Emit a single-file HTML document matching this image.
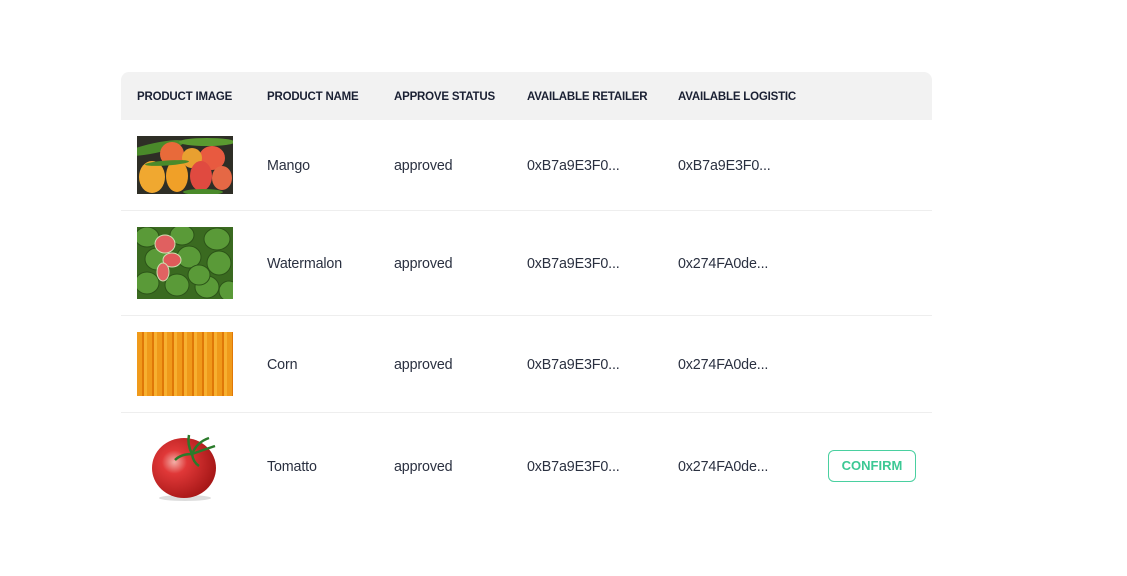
<!DOCTYPE html>
<html><head><meta charset="utf-8"><style>
*{margin:0;padding:0;box-sizing:border-box}
body{width:1127px;height:576px;background:#fff;font-family:"Segoe UI","Liberation Sans",sans-serif;position:relative;overflow:hidden;color:#222a3a}
.hd{position:absolute;left:121px;top:72px;width:811px;height:48px;background:#f2f2f2;border-radius:8px 8px 0 0}
.h{position:absolute;top:90px;font-size:11.5px;font-weight:bold;color:#1a2033;letter-spacing:-0.2px;line-height:14px;top:90px}
.t{position:absolute;font-size:14.3px;color:#2a3040;line-height:18px;letter-spacing:-0.15px}
.ln{position:absolute;left:121px;width:811px;height:1px;background:#eeeeee}
.img{position:absolute;left:137px;width:96px;overflow:hidden}
.btn{position:absolute;left:828px;top:450px;width:88px;height:32px;border:1px solid #4ad0a0;border-radius:6px;color:#3cc894;font-size:13px;font-weight:bold;text-align:center;line-height:30px}
</style></head><body>
<div class="hd"></div>
<div class="h" style="left:137px">PRODUCT IMAGE</div>
<div class="h" style="left:267px">PRODUCT NAME</div>
<div class="h" style="left:394px">APPROVE STATUS</div>
<div class="h" style="left:527px">AVAILABLE RETAILER</div>
<div class="h" style="left:678px">AVAILABLE LOGISTIC</div>

<div class="img" style="top:136px;height:58px;background:#2e2e26">
<svg width="96" height="58"><g>
<ellipse cx="18" cy="12" rx="30" ry="5" fill="#4a8a2a" transform="rotate(-12 18 12)"/>
<ellipse cx="70" cy="6" rx="28" ry="4" fill="#5a9a30"/>
<ellipse cx="35" cy="18" rx="12" ry="12" fill="#e86a3a"/>
<ellipse cx="75" cy="22" rx="13" ry="12" fill="#e85a40"/>
<ellipse cx="55" cy="22" rx="10" ry="10" fill="#e8a030"/>
<ellipse cx="15" cy="41" rx="13" ry="16" fill="#f0a830"/>
<ellipse cx="40" cy="40" rx="11" ry="16" fill="#f0a028"/>
<ellipse cx="64" cy="40" rx="11" ry="15" fill="#e04a40"/>
<ellipse cx="85" cy="42" rx="10" ry="12" fill="#e56845"/>
<ellipse cx="30" cy="27" rx="22" ry="2.5" fill="#4a8a2a" transform="rotate(-4 30 27)"/>
<ellipse cx="66" cy="56" rx="20" ry="3" fill="#4a8a2a"/>
</g></svg></div>

<div class="img" style="top:227px;height:72px;background:#3a6a20">
<svg width="96" height="72"><g fill="#5a9a38" stroke="#2c5418" stroke-width="1">
<ellipse cx="10" cy="10" rx="12" ry="10"/><ellipse cx="45" cy="8" rx="12" ry="10"/><ellipse cx="80" cy="12" rx="13" ry="11"/>
<ellipse cx="20" cy="32" rx="12" ry="11"/><ellipse cx="52" cy="30" rx="12" ry="11"/><ellipse cx="82" cy="36" rx="12" ry="12"/>
<ellipse cx="10" cy="56" rx="12" ry="11"/><ellipse cx="40" cy="58" rx="12" ry="11"/><ellipse cx="70" cy="60" rx="12" ry="11"/><ellipse cx="92" cy="64" rx="10" ry="10"/>
<ellipse cx="62" cy="48" rx="11" ry="10"/></g>
<ellipse cx="28" cy="17" rx="10" ry="9" fill="#e06060" stroke="#cde0b0"/>
<ellipse cx="35" cy="33" rx="9" ry="7" fill="#e05a5a" stroke="#cde0b0"/>
<ellipse cx="26" cy="45" rx="6" ry="9" fill="#e06262" stroke="#cde0b0"/>
</svg></div>

<div class="img" style="top:332px;height:64px;background:repeating-linear-gradient(90deg,#f09a1a 0 5px,#e07808 5px 7px,#f7b030 7px 10px),#f09a1a"></div>

<div class="img" style="top:432px;height:70px">
<svg width="96" height="70"><defs><radialGradient id="r" cx="0.35" cy="0.4" r="0.65"><stop offset="0" stop-color="#f3b0a8"/><stop offset="0.3" stop-color="#e03838"/><stop offset="1" stop-color="#a81818"/></radialGradient></defs>
<ellipse cx="48" cy="66" rx="26" ry="3" fill="#ddd"/>
<ellipse cx="47" cy="36" rx="32" ry="30" fill="url(#r)"/>
<path d="M55 22 Q50 12 52 3 M55 22 Q60 10 72 6 M55 22 Q66 18 78 14 M55 22 Q44 22 38 28 M55 22 Q56 30 62 34" stroke="#2a7a2a" stroke-width="2.5" fill="none"/>
</svg></div>

<div class="t" style="left:267px;top:157px">Mango</div>
<div class="t" style="left:394px;top:157px">approved</div>
<div class="t" style="left:527px;top:157px">0xB7a9E3F0...</div>
<div class="t" style="left:678px;top:157px">0xB7a9E3F0...</div>
<div class="ln" style="top:210px"></div>

<div class="t" style="left:267px;top:255px">Watermalon</div>
<div class="t" style="left:394px;top:255px">approved</div>
<div class="t" style="left:527px;top:255px">0xB7a9E3F0...</div>
<div class="t" style="left:678px;top:255px">0x274FA0de...</div>
<div class="ln" style="top:315px"></div>

<div class="t" style="left:267px;top:356px">Corn</div>
<div class="t" style="left:394px;top:356px">approved</div>
<div class="t" style="left:527px;top:356px">0xB7a9E3F0...</div>
<div class="t" style="left:678px;top:356px">0x274FA0de...</div>
<div class="ln" style="top:412px"></div>

<div class="t" style="left:267px;top:458px">Tomatto</div>
<div class="t" style="left:394px;top:458px">approved</div>
<div class="t" style="left:527px;top:458px">0xB7a9E3F0...</div>
<div class="t" style="left:678px;top:458px">0x274FA0de...</div>
<div class="btn">CONFIRM</div>
</body></html>
